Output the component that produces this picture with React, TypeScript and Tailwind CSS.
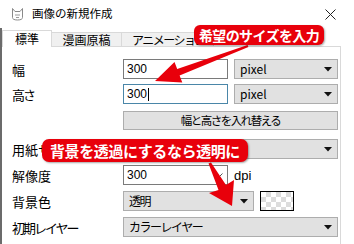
import React from "react";

const jp = "font-['Noto_Sans_CJK_JP','Noto_Sans',sans-serif]";

function Caret() {
  return (
    <svg width="8" height="5" viewBox="0 0 8 5" className="shrink-0">
      <path d="M0 0H8L4 4.5Z" fill="#111" />
    </svg>
  );
}

function Select({
  value,
  className,
  latin = false,
}: {
  value: string;
  className: string;
  latin?: boolean;
}) {
  return (
    <div
      className={`flex h-[20px] items-center justify-between border border-[#adadad] bg-[#e1e1e1] pl-[5px] pr-[5px] text-[12px] text-black ${className}`}
    >
      <span className={`${jp} leading-none ${latin ? "" : "tracking-[-1.5px]"}`}>{value}</span>
      <Caret />
    </div>
  );
}

function Row({
  label,
  children,
  className = "",
  tight = false,
}: {
  label: string;
  children: React.ReactNode;
  className?: string;
  tight?: boolean;
}) {
  return (
    <div className={`flex items-center ${className}`}>
      <div
        className={`${jp} w-[111px] text-[13px] leading-none text-black ${tight ? "tracking-[-2px]" : ""}`}
      >
        {label}
      </div>
      {children}
    </div>
  );
}

export default function App() {
  return (
    <div className={`relative h-[244px] w-[354px] overflow-hidden bg-white ${jp}`}>
      {/* title bar */}
      <div className="flex h-[28px] items-center pl-[11px]">
        <svg width="13" height="14" viewBox="0 0 13 14" className="mr-[8px]">
          <path
            d="M1.5 1.5L4 4.5H9L11.5 1.5V10.5C11.5 12 10 13 6.5 13S1.5 12 1.5 10.5Z"
            fill="none"
            stroke="#8a8a8a"
            strokeWidth="1"
          />
          <path d="M4 8H9M5 10.5H8" stroke="#9a9a9a" strokeWidth="1" />
        </svg>
        <span className="text-[11.5px] leading-none text-black">画像の新規作成</span>
        <svg width="11" height="11" viewBox="0 0 11 11" className="ml-auto mr-[18px]">
          <path d="M0.5 0.5L10.5 10.5M10.5 0.5L0.5 10.5" stroke="#222" strokeWidth="1" />
        </svg>
      </div>

      <div className="flex h-[216px]">
        <div className="w-[2px] bg-[#6b6b6b]" />
        <div className="flex w-[339px] flex-col">
          {/* tabs */}
          <div className="flex h-[19px] items-end">
            <div className="flex h-[17px] w-[50px] items-center justify-center border-x border-t border-[#d9d9d9] bg-white text-[12px] leading-none">
              標準
            </div>
            <div className="flex h-[15px] w-[70px] items-center justify-center border-b border-r border-t border-[#d9d9d9] bg-[#f0f0f0] text-[12px] leading-none">
              漫画原稿
            </div>
            <div className="flex h-[15px] w-[92px] items-center border-b border-r border-t border-[#d9d9d9] bg-[#f0f0f0] pl-[10px] text-[12px] leading-none tracking-[-1.5px]">
              アニメーション
            </div>
            <div className="h-[15px] flex-1 border-b border-[#d9d9d9]" />
          </div>

          {/* panel */}
          <div className="flex flex-1 flex-col border-r border-[#d9d9d9] pl-[10px] pt-[12px]">
            <Row label="幅">
              <div className="flex h-[20px] w-[105px] items-center border border-[#7a7a7a] bg-white pl-[3px] font-['Liberation_Sans',sans-serif] text-[12px] leading-none">
                300
              </div>
              <Select value="pixel" latin className="ml-[6px] w-[104px]" />
            </Row>
            <Row label="高さ" className="mt-[5px]" tight>
              <div className="flex h-[20px] w-[105px] items-center border border-[#4a86a8] bg-white pl-[3px] font-['Liberation_Sans',sans-serif] text-[12px] leading-none">
                300
                <span className="ml-[1px] h-[13px] w-[1px] bg-black" />
              </div>
              <Select value="pixel" latin className="ml-[6px] w-[104px]" />
            </Row>
            <Row label="" className="mt-[7px]">
              <div className="flex h-[19px] w-[215px] items-center justify-center border border-[#adadad] bg-[#e1e1e1] text-[11.5px] leading-none tracking-[-1.5px] text-black">
                幅と高さを入れ替える
              </div>
            </Row>
            <Row label="用紙サイズ" className="mt-[9px]">
              <Select value="" className="w-[215px]" />
            </Row>
            <Row label="解像度" className="mt-[6px]">
              <div className="flex h-[20px] w-[105px] items-center justify-between border border-[#7a7a7a] bg-white pl-[3px] pr-[4px] font-['Liberation_Sans',sans-serif] text-[12px] leading-none">
                300
                <svg width="8" height="5" viewBox="0 0 8 5">
                  <path d="M0.5 0.5L4 4L7.5 0.5" fill="none" stroke="#555" strokeWidth="1" />
                </svg>
              </div>
              <span className="ml-[6px] font-['Liberation_Sans',sans-serif] text-[13px] leading-none">
                dpi
              </span>
            </Row>
            <Row label="背景色" className="mt-[6px]">
              <Select value="透明" className="w-[131px]" />
              <div className="ml-[6px] h-[20px] w-[34px] border border-black bg-[image:repeating-conic-gradient(#dcdcdc_0%_25%,#ffffff_0%_50%)] bg-[length:10px_10px]" />
            </Row>
            <Row label="初期レイヤー" className="mt-[6px]" tight>
              <Select value="カラーレイヤー" className="w-[215px]" />
            </Row>
          </div>
        </div>
      </div>

      {/* arrows */}
      <svg className="pointer-events-none absolute left-0 top-0" width="354" height="244">
        <polygon
          points="155,81 182.3,82.5 179.6,75.5 248.4,46.9 247.6,45.1 177.2,68.9 174.5,61.9"
          fill="#e8000b"
        />
        <polygon
          points="232,206 234,180 226,185 211,162.5 208.5,163.5 218.5,190 209,193"
          fill="#e8000b"
        />
      </svg>

      {/* callouts */}
      <div className="absolute left-[194px] top-[25px] flex h-[20px] w-[130px] items-center justify-center rounded-[6px] bg-[#e8000b] text-[14px] font-bold leading-none tracking-[-0.6px] text-white shadow-[1px_1px_2px_rgba(0,0,0,0.35)]">
        希望のサイズを入力
      </div>
      <div className="absolute left-[42px] top-[139px] flex h-[23px] w-[206px] items-center justify-center rounded-[7px] bg-[#e8000b] text-[15px] font-bold leading-none tracking-[-0.4px] text-white shadow-[1px_1px_2px_rgba(0,0,0,0.35)]">
        背景を透過にするなら透明に
      </div>
    </div>
  );
}
